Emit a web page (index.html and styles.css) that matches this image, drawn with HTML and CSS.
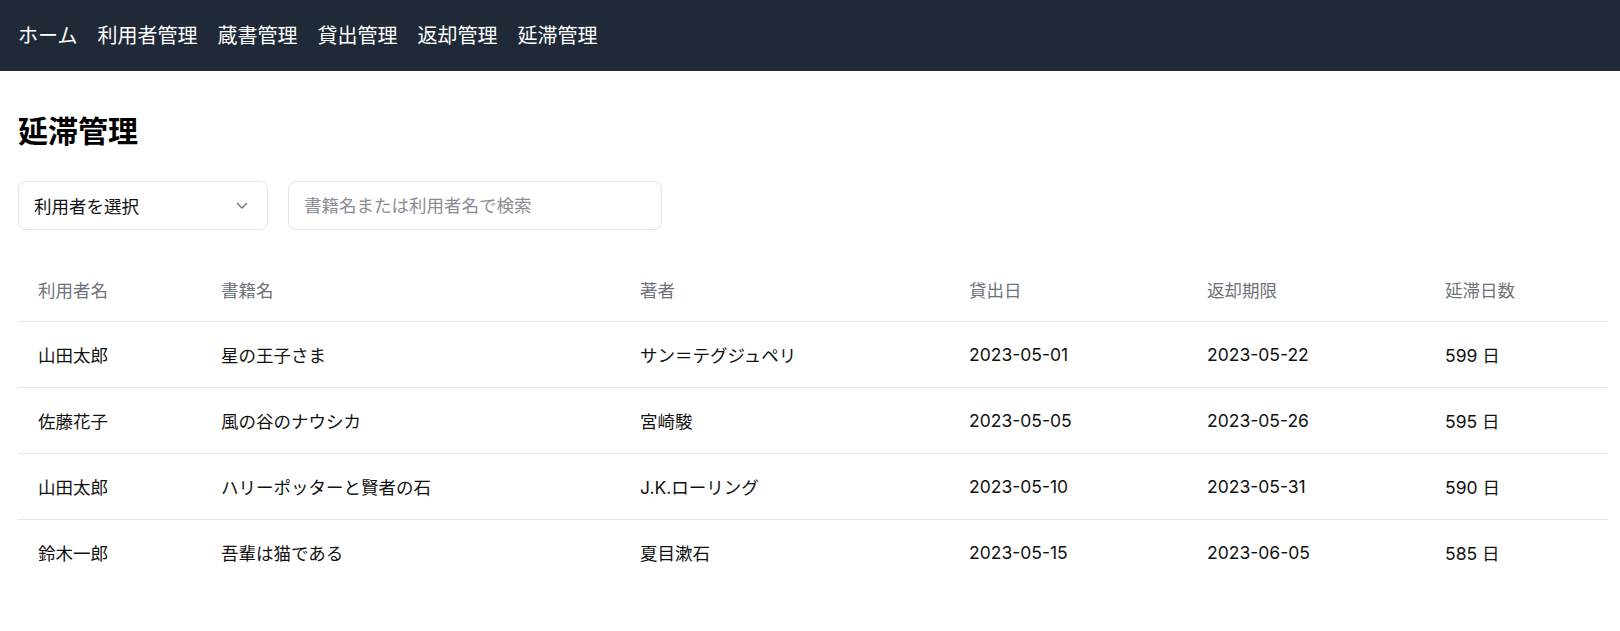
FILE: index.html
```html
<!DOCTYPE html>
<html lang="ja">
<head>
<meta charset="utf-8">
<title>延滞管理</title>
<link rel="stylesheet" href="styles.css">
</head>
<body>
<nav class="topnav">
  <a class="nav-link" href="#">ホーム</a>
  <a class="nav-link" href="#">利用者管理</a>
  <a class="nav-link" href="#">蔵書管理</a>
  <a class="nav-link" href="#">貸出管理</a>
  <a class="nav-link" href="#">返却管理</a>
  <a class="nav-link" href="#">延滞管理</a>
</nav>
<main class="page">
  <h1 class="page-title">延滞管理</h1>
  <div class="filters">
    <div class="select-box">
      <span class="select-label">利用者を選択</span>
      <svg class="chevron" width="12" height="8" viewBox="0 0 12 8" aria-hidden="true"><path d="M1.5 1.5 L6 6 L10.5 1.5" fill="none" stroke="#6b7280" stroke-width="1.4" stroke-linecap="round" stroke-linejoin="round"/></svg>
    </div>
    <input class="search-box" type="text" placeholder="書籍名または利用者名で検索">
  </div>
  <table class="overdue-table">
    <colgroup>
      <col class="c-user"><col class="c-book"><col class="c-author"><col class="c-date"><col class="c-date"><col class="c-days">
    </colgroup>
    <thead>
      <tr><th>利用者名</th><th>書籍名</th><th>著者</th><th>貸出日</th><th>返却期限</th><th>延滞日数</th></tr>
    </thead>
    <tbody>
      <tr><td>山田太郎</td><td>星の王子さま</td><td>サン＝テグジュペリ</td><td>2023-05-01</td><td>2023-05-22</td><td>599 日</td></tr>
      <tr><td>佐藤花子</td><td>風の谷のナウシカ</td><td>宮崎駿</td><td>2023-05-05</td><td>2023-05-26</td><td>595 日</td></tr>
      <tr><td>山田太郎</td><td>ハリーポッターと賢者の石</td><td>J.K.ローリング</td><td>2023-05-10</td><td>2023-05-31</td><td>590 日</td></tr>
      <tr><td>鈴木一郎</td><td>吾輩は猫である</td><td>夏目漱石</td><td>2023-05-15</td><td>2023-06-05</td><td>585 日</td></tr>
    </tbody>
  </table>
</main>
</body>
</html>
```
FILE: styles.css
```css
* { box-sizing: border-box; }
html, body { margin: 0; padding: 0; background: #ffffff; }
body {
  font-family: Inter, "Noto Sans CJK JP", sans-serif;
  color: #111111;
}
.topnav {
  height: 71px;
  background: #1f2937;
  display: flex;
  align-items: center;
  gap: 20px;
  padding: 0 18px;
}
.nav-link {
  color: #ffffff;
  text-decoration: none;
  font-size: 20px;
  line-height: 1;
}
.page {
  padding: 42px 12px 0 18px;
}
.page-title {
  margin: 0;
  font-size: 30px;
  line-height: 36px;
  font-weight: 700;
  color: #000000;
}
.filters {
  margin-top: 32px;
  display: flex;
  gap: 20px;
}
.select-box {
  width: 250px;
  height: 49px;
  border: 1px solid #e3e4e8;
  border-radius: 8px;
  display: flex;
  align-items: center;
  justify-content: space-between;
  padding: 0 19px 0 15px;
  font-size: 17.5px;
  color: #111111;
}
.search-box {
  width: 374px;
  height: 49px;
  border: 1px solid #e3e4e8;
  border-radius: 8px;
  padding: 0 15px;
  font-family: inherit;
  font-size: 17.5px;
  color: #111111;
  outline: none;
}
.search-box::placeholder { color: #8a8d94; }
.overdue-table {
  margin-top: 29px;
  width: 1590px;
  table-layout: fixed;
  border-collapse: collapse;
  font-size: 17.5px;
}
.c-user { width: 183px; }
.c-book { width: 419px; }
.c-author { width: 329px; }
.c-date { width: 238px; }
.c-days { width: 183px; }
.overdue-table th {
  height: 62px;
  padding: 0 20px;
  text-align: left;
  font-weight: 400;
  color: #6f737b;
  border-bottom: 1px solid #e4e5e8;
}
.overdue-table td {
  height: 66px;
  padding: 0 20px;
  color: #111111;
}
.overdue-table tbody tr + tr td { border-top: 1px solid #e4e5e8; }
```
